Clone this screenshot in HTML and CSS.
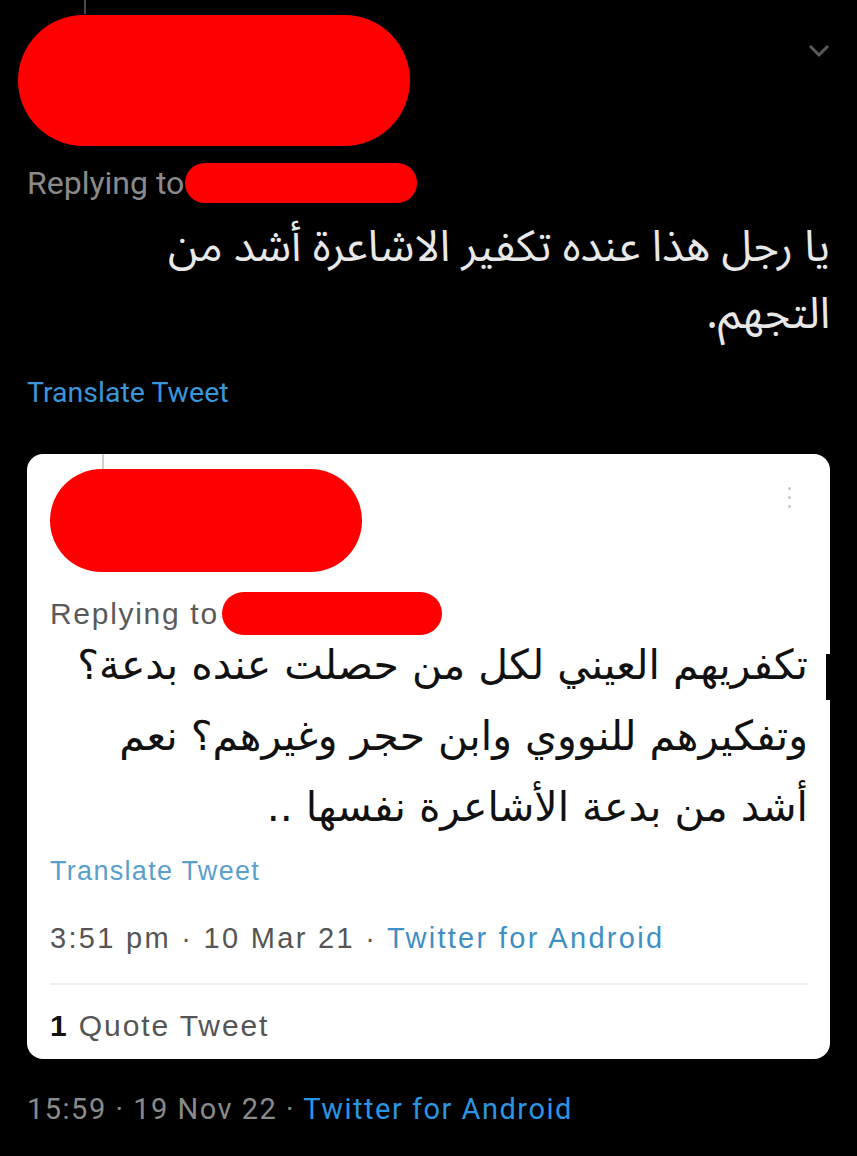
FILE: index.html
```html
<!DOCTYPE html>
<html lang="en">
<head>
<meta charset="utf-8">
<link rel="stylesheet" href="styles.css">
</head>
<body>
<main class="tweet">
  <div class="thread-line"></div>
  <div class="header">
    <div class="redact redact-name"></div>
    <svg class="chevron" width="24" height="16" viewBox="0 0 24 16"><path d="M3 3 L12 12 L21 3" fill="none" stroke="#5a5a5a" stroke-width="3"/></svg>
  </div>
  <div class="reply-line">
    <span class="reply-label">Replying to</span><span class="redact redact-handle"></span>
  </div>
  <p class="tweet-text" dir="rtl">يا رجل هذا عنده تكفير الاشاعرة أشد من التجهم.</p>
  <div class="translate">Translate Tweet</div>

  <section class="card">
    <div class="card-thread-line"></div>
    <div class="card-header">
      <div class="redact card-name"></div>
      <div class="dots"><span></span><span></span><span></span></div>
    </div>
    <div class="card-reply">
      <span class="card-reply-label">Replying to</span><span class="redact card-handle"></span>
    </div>
    <p class="card-text" dir="rtl">تكفريهم العيني لكل من حصلت عنده بدعة؟<br>وتفكيرهم للنووي وابن حجر وغيرهم؟ نعم<br>أشد من بدعة الأشاعرة نفسها ..</p>
    <div class="card-translate">Translate Tweet</div>
    <div class="card-meta">3:51 pm · 10 Mar 21 · <span class="card-source">Twitter for Android</span></div>
    <div class="card-divider"></div>
    <div class="card-quotes"><b>1</b> Quote Tweet</div>
    <div class="card-edge-mark"></div>
  </section>

  <div class="footer">15:59 · 19 Nov 22 · <span class="source">Twitter for Android</span></div>
</main>
</body>
</html>
```
FILE: styles.css
```css
html, body {
  margin: 0;
  padding: 0;
  background: #000;
}
body {
  width: 857px;
  height: 1156px;
  overflow: hidden;
  font-family: Roboto, "Liberation Sans", sans-serif;
}
.tweet {
  display: flex;
  flex-direction: column;
}
.redact {
  background: #ff0000;
  border-radius: 999px;
  display: block;
}
.thread-line {
  width: 2px;
  height: 14px;
  margin-left: 84px;
  background: #4a4a4a;
}
.header {
  display: flex;
  justify-content: space-between;
  align-items: flex-start;
  margin-top: 1px;
  padding: 0 26px 0 18px;
}
.redact-name {
  width: 392px;
  height: 131px;
}
.chevron {
  margin-top: 28px;
}
.reply-line {
  display: flex;
  align-items: center;
  margin-top: 17px;
  padding-left: 27px;
  height: 40px;
}
.reply-label {
  color: #8a8a8a;
  font-size: 32px;
}
.redact-handle {
  width: 232px;
  height: 40px;
  margin-left: 1px;
}
.tweet-text {
  margin: 11px 27px 0 100px;
  color: #e8e8e8;
  font-family: "Noto Sans Arabic", "DejaVu Sans", sans-serif;
  font-size: 43.5px;
  line-height: 67px;
  text-align: right;
}
.translate {
  margin: 28px 0 0 27px;
  color: #3b96d9;
  font-size: 28.5px;
}
.card {
  position: relative;
  margin: 45px 27px 0 27px;
  background: #fff;
  border-radius: 16px;
  padding: 0 22px 0 23px;
  height: 605px;
  box-sizing: border-box;
  display: flex;
  flex-direction: column;
  font-family: "Liberation Sans", Arial, sans-serif;
}
.card-thread-line {
  width: 2px;
  height: 15px;
  margin-left: 52px;
  background: #cfcfcf;
}
.card-header {
  display: flex;
  justify-content: space-between;
  align-items: flex-start;
}
.card-name {
  width: 312px;
  height: 103px;
}
.dots {
  display: flex;
  flex-direction: column;
  gap: 6px;
  margin: 18px 17px 0 0;
}
.dots span {
  width: 3px;
  height: 3px;
  background: #c4c4c4;
  border-radius: 50%;
}
.card-reply {
  display: flex;
  align-items: center;
  margin-top: 20px;
  height: 43px;
}
.card-reply-label {
  color: #5a5a5a;
  font-size: 30px;
  letter-spacing: 1.7px;
}
.card-reply .card-handle {
  width: 220px;
  height: 43px;
  margin-left: 3px;
}
.card-text {
  margin: -5px 0 0 0;
  color: #111;
  font-family: "DejaVu Sans", sans-serif;
  font-size: 41px;
  line-height: 71px;
  text-align: right;
  white-space: nowrap;
}
.card-translate {
  margin-top: 13px;
  color: #5a9fcc;
  font-size: 27px;
  letter-spacing: 1.3px;
}
.card-meta {
  margin-top: 35px;
  color: #555;
  font-size: 29px;
  letter-spacing: 2.3px;
}
.card-source {
  color: #3f8fc4;
}
.card-divider {
  margin-top: 28px;
  height: 2px;
  background: #eeeeee;
}
.card-quotes {
  margin-top: 24px;
  color: #555;
  font-size: 30px;
  letter-spacing: 1.9px;
}
.card-quotes b {
  color: #111;
}
.card-edge-mark {
  position: absolute;
  right: 0;
  top: 200px;
  width: 4px;
  height: 46px;
  background: #000;
}
.footer {
  margin: 33px 0 0 27px;
  color: #8a8a8a;
  font-size: 29px;
  letter-spacing: 1.5px;
}
.source {
  color: #2a95e0;
}
```
